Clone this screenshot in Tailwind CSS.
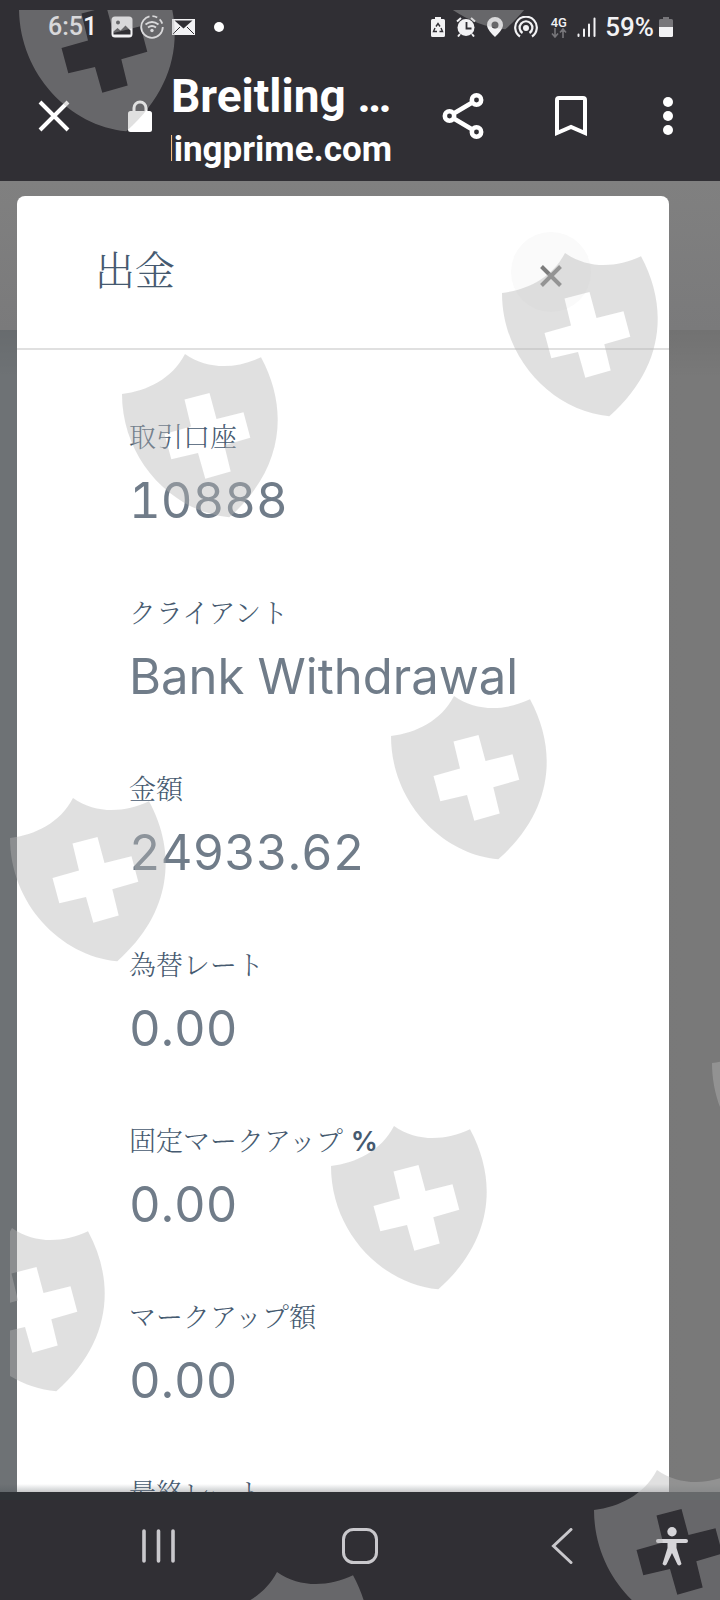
<!DOCTYPE html>
<html lang="ja">

<head>
    <meta charset="UTF-8">
    <meta name="viewport" content="width=device-width, initial-scale=1.0">
    <title>出金</title>
    <script src="https://cdn.jsdelivr.net/npm/@tailwindcss/browser@4"></script>
</head>

<body class="relative flex h-screen flex-col overflow-hidden bg-[#302f34] font-[Roboto,'Noto_Sans_CJK_JP',sans-serif] text-white">

    <!-- Status bar -->
    <div class="flex h-[52px] shrink-0 items-center justify-between pt-0.5 pr-[47px] pl-12 text-[25px] leading-8 font-medium text-[#f2f2f4]">
        <div class="flex items-center">
            <span class="w-[63px]">6:51</span>
            <svg class="h-[22px] w-[22px]" viewBox="0 0 22 22">
                <rect x="0.5" y="0.5" width="21" height="21" rx="3.5" fill="#f2f2f4" />
                <circle cx="7" cy="6.500" r="2" fill="#302f34" />
                <path d="M2.500 18.500v-3l4-3.500 3 2.500 5-5 5 5v4z" fill="#302f34" />
            </svg>
            <svg class="ml-[7px] h-6 w-6" viewBox="0 0 24 24" fill="none" stroke="#f2f2f4">
                <circle cx="12" cy="12" r="10.800" stroke-width="1.800" stroke-dasharray="48 3 5 3 5 4" />
                <path d="M5.500 9.500q6.500-5 13 0M8 12.500q4-3 8 0" stroke-width="1.900" />
                <circle cx="12" cy="15.500" r="1.700" fill="#f2f2f4" stroke="none" />
            </svg>
            <svg class="ml-2 h-4 w-[23px]" viewBox="0 0 23 16">
                <path d="M0 0h23v16H0z" fill="#f2f2f4" />
                <path d="M2.500 1.500h18l-9 8z" fill="#302f34" />
                <path d="M1 15l7-7M22 15l-7-7" stroke="#302f34" stroke-width="1" />
            </svg>
            <span class="ml-[19px] h-[10px] w-[10px] rounded-full bg-white"></span>
        </div>
        <div class="flex items-center">
            <svg class="h-5 w-[14px]" viewBox="0 0 14 20">
                <path d="M4 0h6v2h2.500Q14 2 14 3.500v15Q14 20 12.500 20h-11Q0 20 0 18.500v-15Q0 2 1.500 2H4z" fill="#f2f2f4" />
                <path d="M5 9.500l2-3 2 3M10 11l1.500 3.500H8.500M6 14.500H2.500L4 11" fill="none" stroke="#302f34" stroke-width="1.400" />
            </svg>
            <svg class="ml-[11px] h-5 w-5" viewBox="0 0 20 20">
                <circle cx="10" cy="10.500" r="8.500" fill="#f2f2f4" />
                <path d="M1 4.500l4-3.500M19 4.500l-4-3.500M4 17l-2 2.500M16 17l2 2.500" stroke="#f2f2f4" stroke-width="2" />
                <path d="M10.500 5v6.500h5" fill="none" stroke="#302f34" stroke-width="1.800" />
            </svg>
            <svg class="ml-[11px] h-5 w-4" viewBox="0 0 16 20">
                <path fill-rule="evenodd" d="M8 0a8 8 0 0 1 8 8c0 4-5 9-8 12C5 17 0 12 0 8a8 8 0 0 1 8-8zm0 4.500a3.500 3.500 0 1 0 0 7 3.500 3.500 0 0 0 0-7z" fill="#f2f2f4" />
            </svg>
            <svg class="ml-[11px] h-[22px] w-6" viewBox="0 0 24 22" fill="none" stroke="#f2f2f4" stroke-width="2.200">
                <path d="M6 20.500a10.800 10.800 0 1 1 12 0" />
                <path d="M8.500 17a6.400 6.400 0 1 1 7 0" />
                <circle cx="12" cy="12" r="3" fill="#f2f2f4" stroke="none" />
            </svg>
            <div class="ml-3 flex w-[17px] flex-col items-center">
                <span class="text-[13px] leading-[11px] font-medium">4G</span>
                <svg class="h-[10px] w-4" viewBox="0 0 16 10" fill="none" stroke="#77767a" stroke-width="1.600">
                    <path d="M4 0v9M1 5.500l3 3.500 3-3.500M12 10V1M9 4.500L12 1l3 3.500" />
                </svg>
            </div>
            <svg class="ml-[10px] h-5 w-[19px]" viewBox="0 0 19 20" stroke="#f2f2f4" stroke-width="2" stroke-linecap="round">
                <path d="M1.500 17.500V19M7 12.500V19M12 7.500V19M17.500 1.500V19" />
            </svg>
            <span class="ml-[9px] text-[26px]">59%</span>
            <svg class="ml-[5px] h-5 w-[14px]" viewBox="0 0 14 20">
                <path d="M4 0h6v2h2.500Q14 2 14 3.500V10H0V3.500Q0 2 1.500 2H4z" fill="#77767a" />
                <path d="M0 10h14v8.500q0 1.500-1.500 1.500h-11Q0 20 0 18.500z" fill="#f2f2f4" />
            </svg>
        </div>
    </div>

    <!-- Browser toolbar -->
    <header class="flex h-[129px] shrink-0 items-center pr-7 pb-0.5 pl-[30px]">
        <button type="button" aria-label="閉じる" class="flex size-12 shrink-0 items-center justify-center">
            <svg class="size-8" viewBox="0 0 32 32" fill="none" stroke="#fff" stroke-width="4">
                <path d="M2 2l28 28M30 2L2 30" />
            </svg>
        </button>
        <svg class="ml-[50px] h-8 w-6 shrink-0" viewBox="0 0 24 32">
            <path d="M6 12V8a6 6 0 0 1 12 0v4" fill="none" stroke="#fff" stroke-width="3" />
            <rect y="11" width="24" height="21" rx="2.500" fill="#fff" />
        </svg>
        <div class="ml-[19px] min-w-0 flex-1 pt-2 font-bold">
            <h1 class="text-[46px] leading-[56px] whitespace-nowrap">Breitling …</h1>
            <div class="mt-1 flex justify-end overflow-hidden text-[35px] leading-[44px]">
                <span>breitlingprime.com</span>
            </div>
        </div>
        <button type="button" aria-label="共有" class="ml-[47px] flex size-12 shrink-0 items-center justify-center">
            <svg class="h-12 w-[42px]" viewBox="0 0 42 48" fill="none" stroke="#fff" stroke-width="4.500">
                <path d="M7.500 24l27-16M7.500 24l27 16" />
                <circle cx="34.500" cy="8" r="4.700" fill="#302f34" />
                <circle cx="7.500" cy="24" r="4.700" fill="#302f34" />
                <circle cx="34.500" cy="40" r="4.700" fill="#302f34" />
            </svg>
        </button>
        <button type="button" aria-label="ブックマーク" class="ml-[60px] flex size-12 shrink-0 items-center justify-center">
            <svg class="h-10 w-8" viewBox="0 0 32 40" fill="none" stroke="#fff" stroke-width="4">
                <path d="M2 37V4q0-2 2-2h24q2 0 2 2v33l-14-6z" />
            </svg>
        </button>
        <button type="button" aria-label="メニュー" class="ml-[49px] flex size-12 shrink-0 flex-col items-center justify-center gap-1">
            <span class="size-[10px] rounded-full bg-white"></span>
            <span class="size-[10px] rounded-full bg-white"></span>
            <span class="size-[10px] rounded-full bg-white"></span>
        </button>
    </header>

    <!-- Dimmed page with the dialog on it -->
    <main class="relative flex min-h-0 flex-1 flex-col overflow-hidden bg-linear-to-r from-[#6e7275] from-5% to-[#797979] to-95%">
        <div class="absolute inset-x-0 top-0 h-[149px] bg-linear-to-b from-[#808080] to-[#7a7a7b]"></div>
        <div class="absolute inset-x-0 top-[149px] h-12 bg-linear-to-b from-black/6 to-transparent"></div>

        <section role="dialog" aria-labelledby="dialog_title"
            class="relative mt-[15px] mr-[51px] ml-[17px] min-h-0 flex-1 overflow-hidden rounded-t-lg bg-white text-[#465a70]">
            <div class="flex h-[154px] items-center justify-between border-b-2 border-[#e0e0e0] pr-[78px] pl-[78px]">
                <h2 id="dialog_title" class="pb-2 font-['Noto_Serif_CJK_JP','Noto_Sans_CJK_JP',serif] text-[40px] leading-[60px] font-light">出金</h2>
                <button type="button" aria-label="閉じる" class="flex size-20 items-center justify-center rounded-full bg-[#fafafa] pt-2">
                    <svg class="size-[22px]" viewBox="0 0 22 22" fill="none" stroke="#7d7d7d" stroke-width="4">
                        <path d="M1.500 1.500l19 19M20.500 1.500l-19 19" />
                    </svg>
                </button>
            </div>

            <dl class="flex flex-col gap-[58px] pt-[70px] pl-28 font-['Inter','Noto_Serif_CJK_JP','Noto_Sans_CJK_JP',sans-serif]">
                <div>
                    <dt class="text-[27px] leading-9 font-light">取引口座</dt>
                    <dd class="mt-2 text-[49px] leading-[74px] text-[#707c89] tabular-nums">10888</dd>
                </div>
                <div>
                    <dt class="text-[27px] leading-9 font-light">クライアント</dt>
                    <dd class="mt-2 text-[49px] leading-[74px] text-[#707c89] tabular-nums">Bank Withdrawal</dd>
                </div>
                <div>
                    <dt class="text-[27px] leading-9 font-light">金額</dt>
                    <dd class="mt-2 text-[49px] leading-[74px] text-[#707c89] tabular-nums">24933.62</dd>
                </div>
                <div>
                    <dt class="text-[27px] leading-9 font-light">為替レート</dt>
                    <dd class="mt-2 text-[49px] leading-[74px] text-[#707c89] tabular-nums">0.00</dd>
                </div>
                <div>
                    <dt class="text-[27px] leading-9 font-light">固定マークアップ <span class="font-semibold">%</span></dt>
                    <dd class="mt-2 text-[49px] leading-[74px] text-[#707c89] tabular-nums">0.00</dd>
                </div>
                <div>
                    <dt class="text-[27px] leading-9 font-light">マークアップ額</dt>
                    <dd class="mt-2 text-[49px] leading-[74px] text-[#707c89] tabular-nums">0.00</dd>
                </div>
                <div>
                    <dt class="text-[27px] leading-9 font-light">最終レート</dt>
                </div>
            </dl>
        </section>
        <div class="absolute inset-x-0 bottom-0 h-2 bg-linear-to-b from-transparent to-[#465055]/30"></div>
    </main>

    <!-- Navigation bar -->
    <nav class="flex h-[108px] shrink-0 items-center border-t-8 border-[#2e3236] pr-6 pb-2 pl-[134px]">
        <div class="flex flex-1 items-center justify-between">
            <button type="button" aria-label="履歴" class="flex size-12 items-center justify-center">
                <svg class="h-[34px] w-[33px]" viewBox="0 0 33 34" stroke="#c9c8cc" stroke-width="3.600" stroke-linecap="round">
                    <path d="M2 2v30M16.500 2v30M31 2v30" />
                </svg>
            </button>
            <button type="button" aria-label="ホーム" class="flex size-12 items-center justify-center">
                <svg class="size-9" viewBox="0 0 36 36" fill="none" stroke="#c9c8cc" stroke-width="3">
                    <rect x="1.500" y="1.500" width="33" height="33" rx="10" />
                </svg>
            </button>
            <button type="button" aria-label="戻る" class="flex size-12 items-center justify-center">
                <svg class="h-9 w-[22px]" viewBox="0 0 22 36" fill="none" stroke="#c9c8cc" stroke-width="3" stroke-linecap="round">
                    <path d="M20 1.500L2.500 18 20 34.500" />
                </svg>
            </button>
        </div>
        <button type="button" aria-label="ユーザー補助" class="ml-[62px] flex size-12 items-center justify-center">
            <svg class="h-[39px] w-8" viewBox="0 0 32 39" fill="#d6d5d9">
                <circle cx="16" cy="4.800" r="4.700" />
                <path d="M2 12h28q2 0 2 2t-2 2h-9.500v5l5 16q-2 2.500-4 .5L16 26l-5.500 11.500q-2 2-4-.5l5-16v-5H2q-2 0-2-2t2-2z" />
            </svg>
        </button>
    </nav>

    <!-- Shield watermark -->
    <svg class="pointer-events-none absolute top-[10px] left-[10px] h-[1590px] w-[calc(100%-10px)] overflow-hidden fill-[#b4b4b4]/42" aria-hidden="true">
        <defs>
            <path id="shield" fill-rule="evenodd"
                d="M0 40C25 37 50 25 63 0C86 16 114 15 139 3.300C167 55 162 115 107.300 163.300C50 158 0 105 0 40zM62.500 45.500L87.500 39L94.500 65L121.500 58.300L128.300 83.700L102.300 91.300L108.700 117.500L83.300 124.700L76 99L49.300 105.300L42.500 80L69 72.500z" />
        </defs>
        <use href="#shield" x="9" y="-42" />
        <use href="#shield" x="388" y="-144" />
        <use href="#shield" x="492" y="243" />
        <use href="#shield" x="112" y="344" />
        <use href="#shield" x="381" y="686" />
        <use href="#shield" x="0" y="788" />
        <use href="#shield" x="702" y="1013" />
        <use href="#shield" x="321" y="1116" />
        <use href="#shield" x="-61" y="1218" />
        <use href="#shield" x="584" y="1460" />
        <use href="#shield" x="204" y="1562" />
    </svg>

</body>

</html>
